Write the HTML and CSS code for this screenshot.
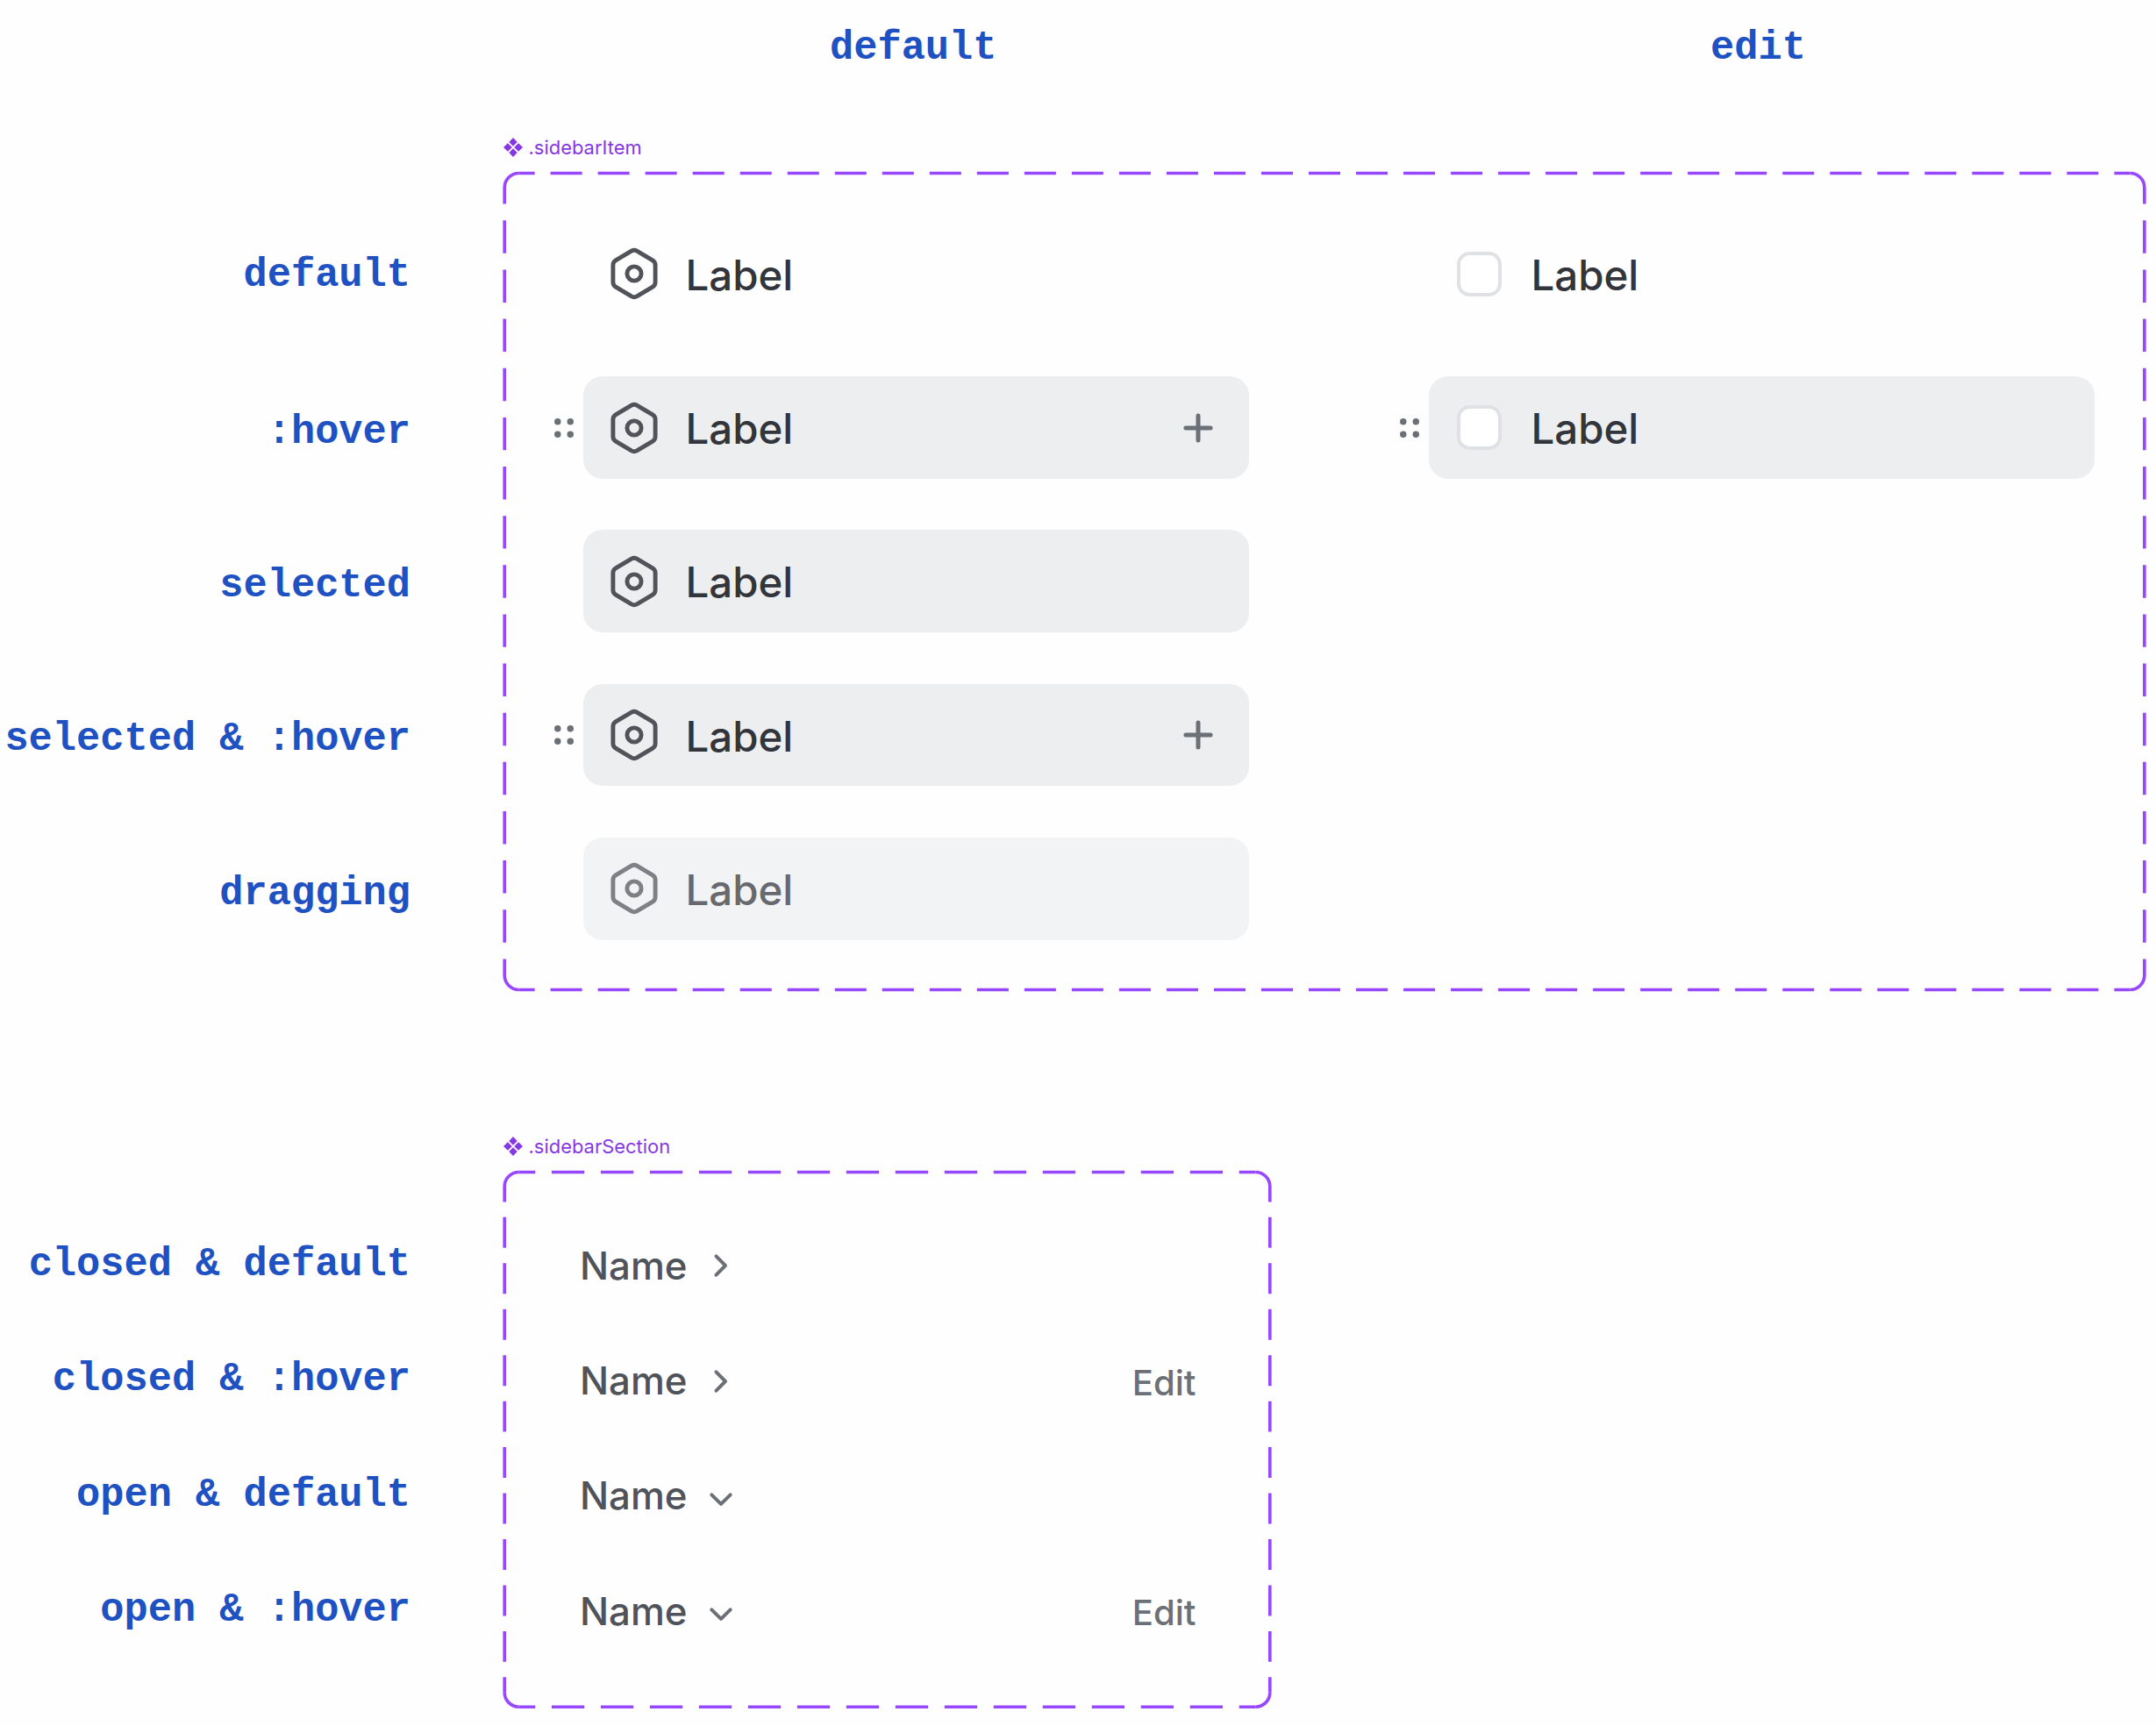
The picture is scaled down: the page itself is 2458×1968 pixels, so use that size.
FILE: index.html
```html
<!DOCTYPE html>
<html lang="en">
<head>
<meta charset="utf-8">
<title>Sidebar components</title>
<link rel="stylesheet" href="styles.css">
</head>
<body>
<svg class="defs" aria-hidden="true">
  <symbol id="component" viewBox="0 0 22 22"><path d="M11 0 15.700 4.900 11 9.800 6.300 4.900ZM11 12.200 15.700 17.100 11 22 6.300 17.100ZM4.900 6.300 9.800 11 4.900 15.700 0 11ZM17.100 6.300 22 11 17.100 15.700 12.200 11Z"/></symbol>
  <symbol id="hex" viewBox="0 0 60 60"><path d="M26.900 4.100Q30 2.500 33.100 4.100L51.100 14.900Q54.100 16.700 54.100 20.300V39.700Q54.100 43.300 51.100 45.100L33.100 55.900Q30 57.500 26.900 55.900L8.900 45.100Q5.900 43.300 5.900 39.700V20.300Q5.900 16.700 8.900 14.900Z"/><circle cx="30" cy="30" r="8.100"/></symbol>
  <symbol id="plus" viewBox="0 0 40 40"><path d="M20 5.900V34.100M5.900 20H34.100"/></symbol>
  <symbol id="grip" viewBox="0 0 24 24"><circle cx="4.750" cy="4.750" r="3.750"/><circle cx="19.250" cy="4.750" r="3.750"/><circle cx="4.750" cy="19.250" r="3.750"/><circle cx="19.250" cy="19.250" r="3.750"/></symbol>
  <symbol id="right" viewBox="0 0 30 30"><path d="M9.500 4.300 20 15 9.500 25.700"/></symbol>
  <symbol id="down" viewBox="0 0 30 30"><path d="M4.300 13.300 15 23.900 25.700 13.300"/></symbol>
</svg>

<main class="page">
  <header class="columns">
    <h2 class="note col-default">default</h2>
    <h2 class="note col-edit">edit</h2>
  </header>

  <section class="board board-items">
    <div class="notes">
      <div class="note first">default</div>
      <div class="note">:hover</div>
      <div class="note">selected</div>
      <div class="note">selected &amp; :hover</div>
      <div class="note">dragging</div>
    </div>
    <div class="component">
      <h3 class="name"><svg class="mark"><use href="#component"/></svg>.sidebarItem</h3>
      <div class="frame frame-items">
        <svg class="outline" viewBox="0 0 1874 935">
          <path class="dash-x" d="M18.600 2.500H1855.400M18.600 933.500H1855.400"/>
          <path class="dash-y" d="M2.200 18.900V917.100M1871.800 18.900V917.100"/>
          <path d="M2.200 18.900A16.400 16.400 0 0 1 18.600 2.500M1855.400 2.500A16.400 16.400 0 0 1 1871.800 18.900M1871.800 917.100A16.400 16.400 0 0 1 1855.400 933.500M18.600 933.500A16.400 16.400 0 0 1 2.200 917.100"/>
        </svg>
        <div class="stack">
          <div class="item"><svg class="hex"><use href="#hex"/></svg><span class="label">Label</span></div>
          <div class="item filled"><svg class="grip"><use href="#grip"/></svg><svg class="hex"><use href="#hex"/></svg><span class="label">Label</span><svg class="plus"><use href="#plus"/></svg></div>
          <div class="item filled"><svg class="hex"><use href="#hex"/></svg><span class="label">Label</span></div>
          <div class="item filled"><svg class="grip"><use href="#grip"/></svg><svg class="hex"><use href="#hex"/></svg><span class="label">Label</span><svg class="plus"><use href="#plus"/></svg></div>
          <div class="item filled dragging"><svg class="hex"><use href="#hex"/></svg><span class="label">Label</span></div>
        </div>
        <div class="stack">
          <div class="item"><span class="check"></span><span class="label">Label</span></div>
          <div class="item filled"><svg class="grip"><use href="#grip"/></svg><span class="check"></span><span class="label">Label</span></div>
        </div>
      </div>
    </div>
  </section>

  <section class="board board-sections">
    <div class="notes">
      <div class="note">closed &amp; default</div>
      <div class="note">closed &amp; :hover</div>
      <div class="note">open &amp; default</div>
      <div class="note">open &amp; :hover</div>
    </div>
    <div class="component">
      <h3 class="name"><svg class="mark"><use href="#component"/></svg>.sidebarSection</h3>
      <div class="frame frame-sections">
        <svg class="outline" viewBox="0 0 877 614">
          <path class="dash-x" d="M18.600 2.500H858.400M18.600 612.200H858.400"/>
          <path class="dash-y" d="M2.200 18.900V595.800M874.800 18.900V595.800"/>
          <path d="M2.200 18.900A16.400 16.400 0 0 1 18.600 2.500M858.400 2.500A16.400 16.400 0 0 1 874.800 18.900M874.800 595.800A16.400 16.400 0 0 1 858.400 612.200M18.600 612.200A16.400 16.400 0 0 1 2.200 595.800"/>
        </svg>
        <div class="row"><span class="title">Name</span><svg class="chevron"><use href="#right"/></svg></div>
        <div class="row"><span class="title">Name</span><svg class="chevron"><use href="#right"/></svg><span class="edit">Edit</span></div>
        <div class="row"><span class="title">Name</span><svg class="chevron"><use href="#down"/></svg></div>
        <div class="row"><span class="title">Name</span><svg class="chevron"><use href="#down"/></svg><span class="edit">Edit</span></div>
      </div>
    </div>
  </section>
</main>
</body>
</html>
```
FILE: styles.css
```css
* { box-sizing: border-box; }

body {
  margin: 0;
  background: #fefefe;
  font-family: Inter, "Liberation Sans", sans-serif;
  font-weight: 500;
}

h2, h3 { margin: 0; }
svg { display: block; flex: none; overflow: visible; }
.defs { position: absolute; width: 0; height: 0; }

.page {
  width: 2458px;
  height: 1968px;
  overflow: hidden;
}

/* Annotations */
.note {
  height: 60px;
  font: 700 45.35px/60px "Liberation Mono", monospace;
  color: #1e51c1;
  white-space: pre;
}

.columns {
  display: flex;
  height: 153px;
  padding: 25px 0 0 946px;
}
.col-default { width: 1004px; }

.board { display: flex; }
.notes {
  display: flex;
  flex-direction: column;
  width: 468px;
  margin-right: 105px;
  text-align: right;
}

.board-items { height: 1139px; }
.board-items .notes { gap: 115.3px; padding-top: 131px; }
.board-items .first { margin-bottom: 3.400px; }
.board-sections .notes { gap: 71.300px; padding-top: 120px; }

/* Component frames */
.name {
  display: flex;
  align-items: center;
  height: 30px;
  padding-left: 1px;
  font-size: 21.950px;
  font-weight: 400;
  line-height: 30px;
  color: #8638e5;
}
.mark { width: 22px; height: 22px; margin-right: 6.500px; fill: #8638e5; }

.frame { position: relative; margin-top: 12px; }
.outline {
  position: absolute;
  inset: 0;
  width: 100%;
  height: 100%;
  fill: none;
  stroke: #9747ff;
  stroke-width: 3.650px;
}

.frame-items {
  display: flex;
  gap: 205px;
  width: 1874px;
  height: 935px;
  padding: 58.900px 0 0 92px;
}
.frame-items .dash-x { stroke-dasharray: 36.016 18.008; stroke-dashoffset: 18.008; }
.frame-items .dash-y { stroke-dasharray: 37.425 18.713; stroke-dashoffset: 18.713; }

.frame-sections {
  width: 877px;
  height: 614px;
  padding: 67.400px 86.500px 0 88px;
}
.frame-sections .dash-x { stroke-dasharray: 37.324 18.662; stroke-dashoffset: 18.662; }
.frame-sections .dash-y { stroke-dasharray: 34.964 17.482; stroke-dashoffset: 17.482; }

/* Sidebar item */
.stack { display: flex; flex-direction: column; gap: 58.600px; width: 759px; }
.item {
  position: relative;
  display: flex;
  align-items: center;
  height: 116.700px;
  padding: 0 38px 0 28px;
  border-radius: 21.900px;
}
.filled { background: #edeef0; }

.hex {
  width: 60px;
  height: 60px;
  margin-right: 28.500px;
  fill: none;
  stroke: #505359;
  stroke-width: 4.900px;
}
.check {
  width: 51px;
  height: 51px;
  margin: 0 33.200px 0 4.300px;
  border: 4px solid #dfe1e4;
  border-radius: 14.600px;
  background: #fff;
}
.label {
  padding-top: 3px;
  font-size: 47.400px;
  line-height: 58px;
  color: #33353c;
}
.plus {
  width: 40px;
  height: 40px;
  margin-left: auto;
  fill: none;
  stroke: #6b6f76;
  stroke-width: 5px;
  stroke-linecap: round;
}
.grip {
  position: absolute;
  left: -34px;
  top: 46.400px;
  width: 24px;
  height: 24px;
  fill: #6b6f76;
}
.dragging { background: #f2f3f5; }
.dragging .hex { stroke: #7d8084; }
.dragging .label { color: #67696e; }

/* Sidebar section */
.row { display: flex; align-items: center; height: 84px; margin-bottom: 47.300px; }
.title { width: 146px; padding-top: 1px; font-size: 43.750px; line-height: 54px; color: #505359; }
.chevron {
  width: 30px;
  height: 30px;
  fill: none;
  stroke: #6b6f76;
  stroke-width: 4px;
  stroke-linecap: round;
  stroke-linejoin: round;
}
.edit { margin-left: auto; padding-top: 4px; font-size: 40.100px; line-height: 54px; color: #6b6f76; }
```
